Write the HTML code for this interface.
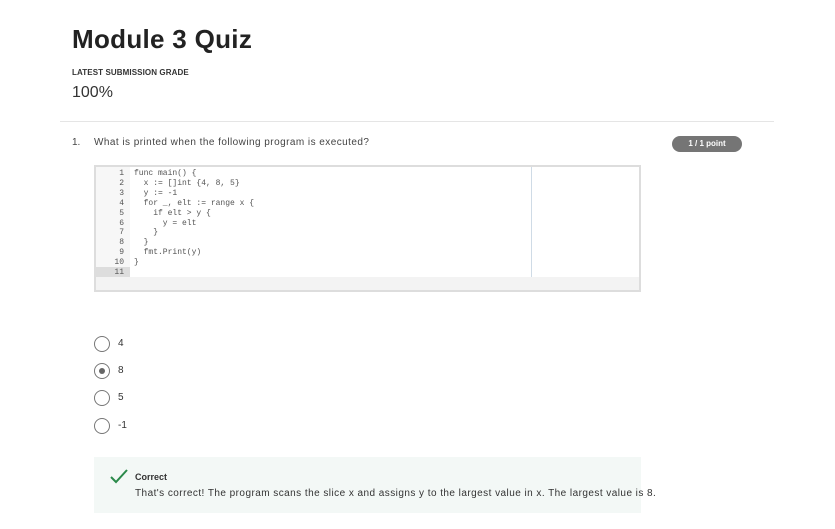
<!DOCTYPE html>
<html><head><style>
body{margin:0;width:835px;height:529px;background:#fff;font-family:"Liberation Sans",sans-serif;color:#333;position:relative;overflow:hidden}
.a{position:absolute}
.code{font-family:"Liberation Mono",monospace;font-size:8px;line-height:9.9px;color:#555;white-space:pre}
.radio{position:absolute;left:94px;width:16px;height:16px;border:1.5px solid #777;border-radius:50%;box-sizing:border-box}
.opt{position:absolute;left:118px;font-size:10px;color:#333}
</style></head><body>
<div class="a" style="left:72px;top:24px;font-size:26px;font-weight:bold;color:#222;letter-spacing:0.3px">Module 3 Quiz</div>
<div class="a" style="left:72px;top:68px;font-size:8px;font-weight:bold;color:#333;letter-spacing:0.1px">LATEST SUBMISSION GRADE</div>
<div class="a" style="left:72px;top:84px;font-size:16px;color:#333">100%</div>
<div class="a" style="left:60px;top:121px;width:714px;height:1px;background:#e5e5e5"></div>
<div class="a" style="left:72px;top:137px;font-size:10px;color:#444">1.</div>
<div class="a" style="left:94px;top:137px;font-size:10px;color:#444;letter-spacing:0.45px">What is printed when the following program is executed?</div>
<div class="a" style="left:672px;top:136px;width:70px;height:16px;border-radius:8px;background:#757575;color:#fff;font-size:8px;font-weight:bold;text-align:center;line-height:16px">1 / 1 point</div>
<div class="a" style="left:94px;top:165px;width:547px;height:127px;border:2px solid #ddd;box-sizing:border-box;background:#f3f3f3">
 <div class="a" style="left:0;top:0;width:543px;height:110px;background:#fff"></div>
 <div class="a" style="left:0;top:0;width:34px;height:110px;background:#f7f7f7"></div>
 <div class="a" style="left:0;top:100px;width:34px;height:10px;background:#ddd"></div>
 <div class="a" style="left:435px;top:0;width:1px;height:110px;background:#cfdbe6"></div>
 <div class="a code" style="left:0;top:2px;width:28px;text-align:right;color:#555"> 1
 2
 3
 4
 5
 6
 7
 8
 9
10
11</div>
 <div class="a code" style="left:38px;top:2px">func main() {
  x := []int {4, 8, 5}
  y := -1
  for _, elt := range x {
    if elt > y {
      y = elt
    }
  }
  fmt.Print(y)
}
</div>
</div>
<div class="radio" style="top:336px"></div><div class="opt" style="top:338px">4</div>
<div class="radio" style="top:363px"><div style="position:absolute;left:3.5px;top:3.5px;width:6px;height:6px;border-radius:50%;background:#666"></div></div><div class="opt" style="top:365px">8</div>
<div class="radio" style="top:390px"></div><div class="opt" style="top:392px">5</div>
<div class="radio" style="top:418px"></div><div class="opt" style="top:420px">-1</div>
<div class="a" style="left:94px;top:457px;width:547px;height:56px;background:#f3f8f6"></div>
<svg class="a" style="left:109px;top:468px" width="20" height="16"><path d="M2 9 L7 14 L18 2" fill="none" stroke="#2a8a4a" stroke-width="2"/></svg>
<div class="a" style="left:135px;top:472px;font-size:9px;font-weight:bold;color:#333">Correct</div>
<div class="a" style="left:135px;top:488px;font-size:10px;color:#333;white-space:nowrap;letter-spacing:0.45px">That's correct! The program scans the slice x and assigns y to the largest value in x. The largest value is 8.</div>
</body></html>
